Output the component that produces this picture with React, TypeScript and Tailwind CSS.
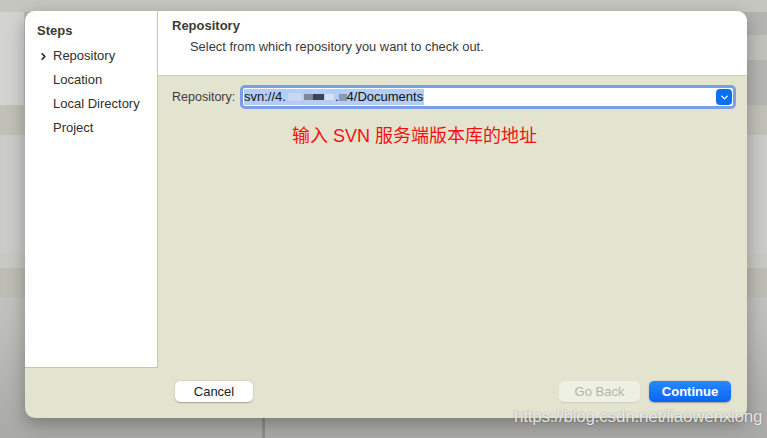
import { ChevronDown, ChevronRight } from 'lucide-react';

const steps = ['Repository', 'Location', 'Local Directory', 'Project'];

export default function App() {
  return (
    <div
      className="relative w-[767px] h-[438px] overflow-hidden bg-[#b4b4b0]"
      style={{ fontFamily: '"Liberation Sans", Arial, sans-serif' }}
    >
      {/* Desktop behind the sheet */}
      <div className="absolute inset-x-0 top-0 h-[12px] bg-[#c6c6c0]" />
      <div className="absolute left-0 top-[12px] w-[25px] h-[93px] bg-[#d3d3d0] border-r border-[#bdbdb8]" />
      <div className="absolute left-0 top-[105px] w-full h-[30px] bg-[#c1c1b9]" />
      <div className="absolute left-0 top-[135px] w-full h-[118px] bg-[#cbcbc8]" />
      <div className="absolute left-0 top-[253px] w-full h-[15px] bg-[#c9c9c3]" />
      <div className="absolute left-0 top-[268px] w-full h-[30px] bg-[#bdbdb5]" />
      <div className="absolute left-0 top-[298px] w-full h-[140px] bg-gradient-to-b from-[#c2c2be] to-[#a9a9a6]" />
      <div className="absolute right-0 top-[35px] w-[20px] h-[25px] bg-[#c2c2bd]" />
      <div className="absolute left-[262px] top-[418px] w-[3px] h-[20px] bg-[#8e8e86]" />

      {/* Sheet */}
      <div className="absolute left-[25px] top-[11px] w-[722px] h-[407px] rounded-[10px] bg-[#e3e4d0] overflow-hidden shadow-[0_6px_18px_rgba(0,0,0,0.3)] flex flex-col">
        <div className="flex h-[357px]">
          {/* Sidebar */}
          <div className="w-[133px] bg-white border-r border-b border-[#c9c7a9] pt-[12px] pl-[12px]">
            <div className="text-[13px] font-bold text-[#3d3b33] leading-[16px]">Steps</div>
            <ul className="mt-[9px] flex flex-col gap-[8px]">
              {steps.map((s, i) => (
                <li key={s} className="flex items-center h-[16px] text-[13px] text-[#2f2f2f]">
                  <span className="w-[16px] flex items-center">
                    {i === 0 && <ChevronRight className="w-[11px] h-[11px] ml-[1px] text-[#222]" strokeWidth={3.5} />}
                  </span>
                  {s}
                </li>
              ))}
            </ul>
          </div>

          {/* Main */}
          <div className="flex-1 flex flex-col">
            <div className="h-[65px] bg-white border-b border-[#cfcdb3] pl-[14px] pt-[7px]">
              <div className="text-[13px] font-bold text-[#3d3b33] leading-[16px]">Repository</div>
              <div className="mt-[6px] pl-[18px] text-[12.9px] text-[#3a3a3a] leading-[14px]">
                Select from which repository you want to check out.
              </div>
            </div>
            <div className="flex-1 flex flex-col">
              <div className="flex items-center mt-[9px] pl-[14px] pr-[11px]">
                <span className="text-[12.5px] text-[#3a3a3a] w-[68px]">Repository:</span>
                <div className="flex-1 h-[24px] rounded-[5px] bg-white border-[3px] border-[#7d9ee6] flex items-center pl-[1px] pr-[1px]">
                  <span className="flex items-center h-[16px] bg-[#b3cdf3] text-[13px] text-[#111] pr-[1px]">
                    svn://4.
                    <span className="inline-block w-[14px] h-[8px] mx-[2px] bg-[#c8d8f2]" />
                    <span className="inline-block w-[9px] h-[6px] bg-[#7c889a]" />
                    <span className="inline-block w-[11px] h-[6px] bg-[#3f4550]" />
                    <span className="inline-block w-[9px] h-[6px] mx-[1px] bg-[#d4e0f4]" />
                    .
                    <span className="inline-block w-[8px] h-[7px] bg-[#8898b8]" />
                    4/Documents
                  </span>
                  <span className="ml-auto w-[16px] h-[16px] rounded-[4px] bg-[#0b6ff5] flex items-center justify-center">
                    <ChevronDown className="w-[11px] h-[11px] text-white" strokeWidth={3} />
                  </span>
                </div>
              </div>
              <div className="mt-[15px] pl-[134px] text-[18px] leading-[24px] text-[#f41010]" style={{ fontFamily: '"Liberation Sans", "Noto Sans CJK SC", sans-serif' }}>
                输入 SVN 服务端版本库的地址
              </div>
            </div>
          </div>
        </div>

        {/* Footer */}
        <div className="flex-1 flex items-start pt-[13px] pl-[150px] pr-[16px]">
          <button className="w-[78px] h-[21px] rounded-[5px] bg-white text-[13px] text-[#222] shadow-[0_0.5px_1.5px_rgba(0,0,0,0.3)]">
            Cancel
          </button>
          <button className="ml-auto w-[81px] h-[21px] rounded-[5px] bg-[#eff0e4] text-[13px] text-[#b3b3a8] shadow-[0_0.5px_1px_rgba(0,0,0,0.1)]">
            Go Back
          </button>
          <button className="ml-[9px] w-[82px] h-[21px] rounded-[5px] bg-gradient-to-b from-[#2a87ff] to-[#0765f0] text-[13px] text-white font-semibold shadow-[0_0.5px_1.5px_rgba(0,0,0,0.3)]">
            Continue
          </button>
        </div>
      </div>

      {/* Watermark */}
      <div className="absolute left-[514px] top-[404px] text-[17px] text-[#f4f4f4]/90 tracking-[-0.2px] [text-shadow:0_0_2px_rgba(0,0,0,0.35)]">
        https://blog.csdn.net/liaowenxiong
      </div>
    </div>
  );
}
